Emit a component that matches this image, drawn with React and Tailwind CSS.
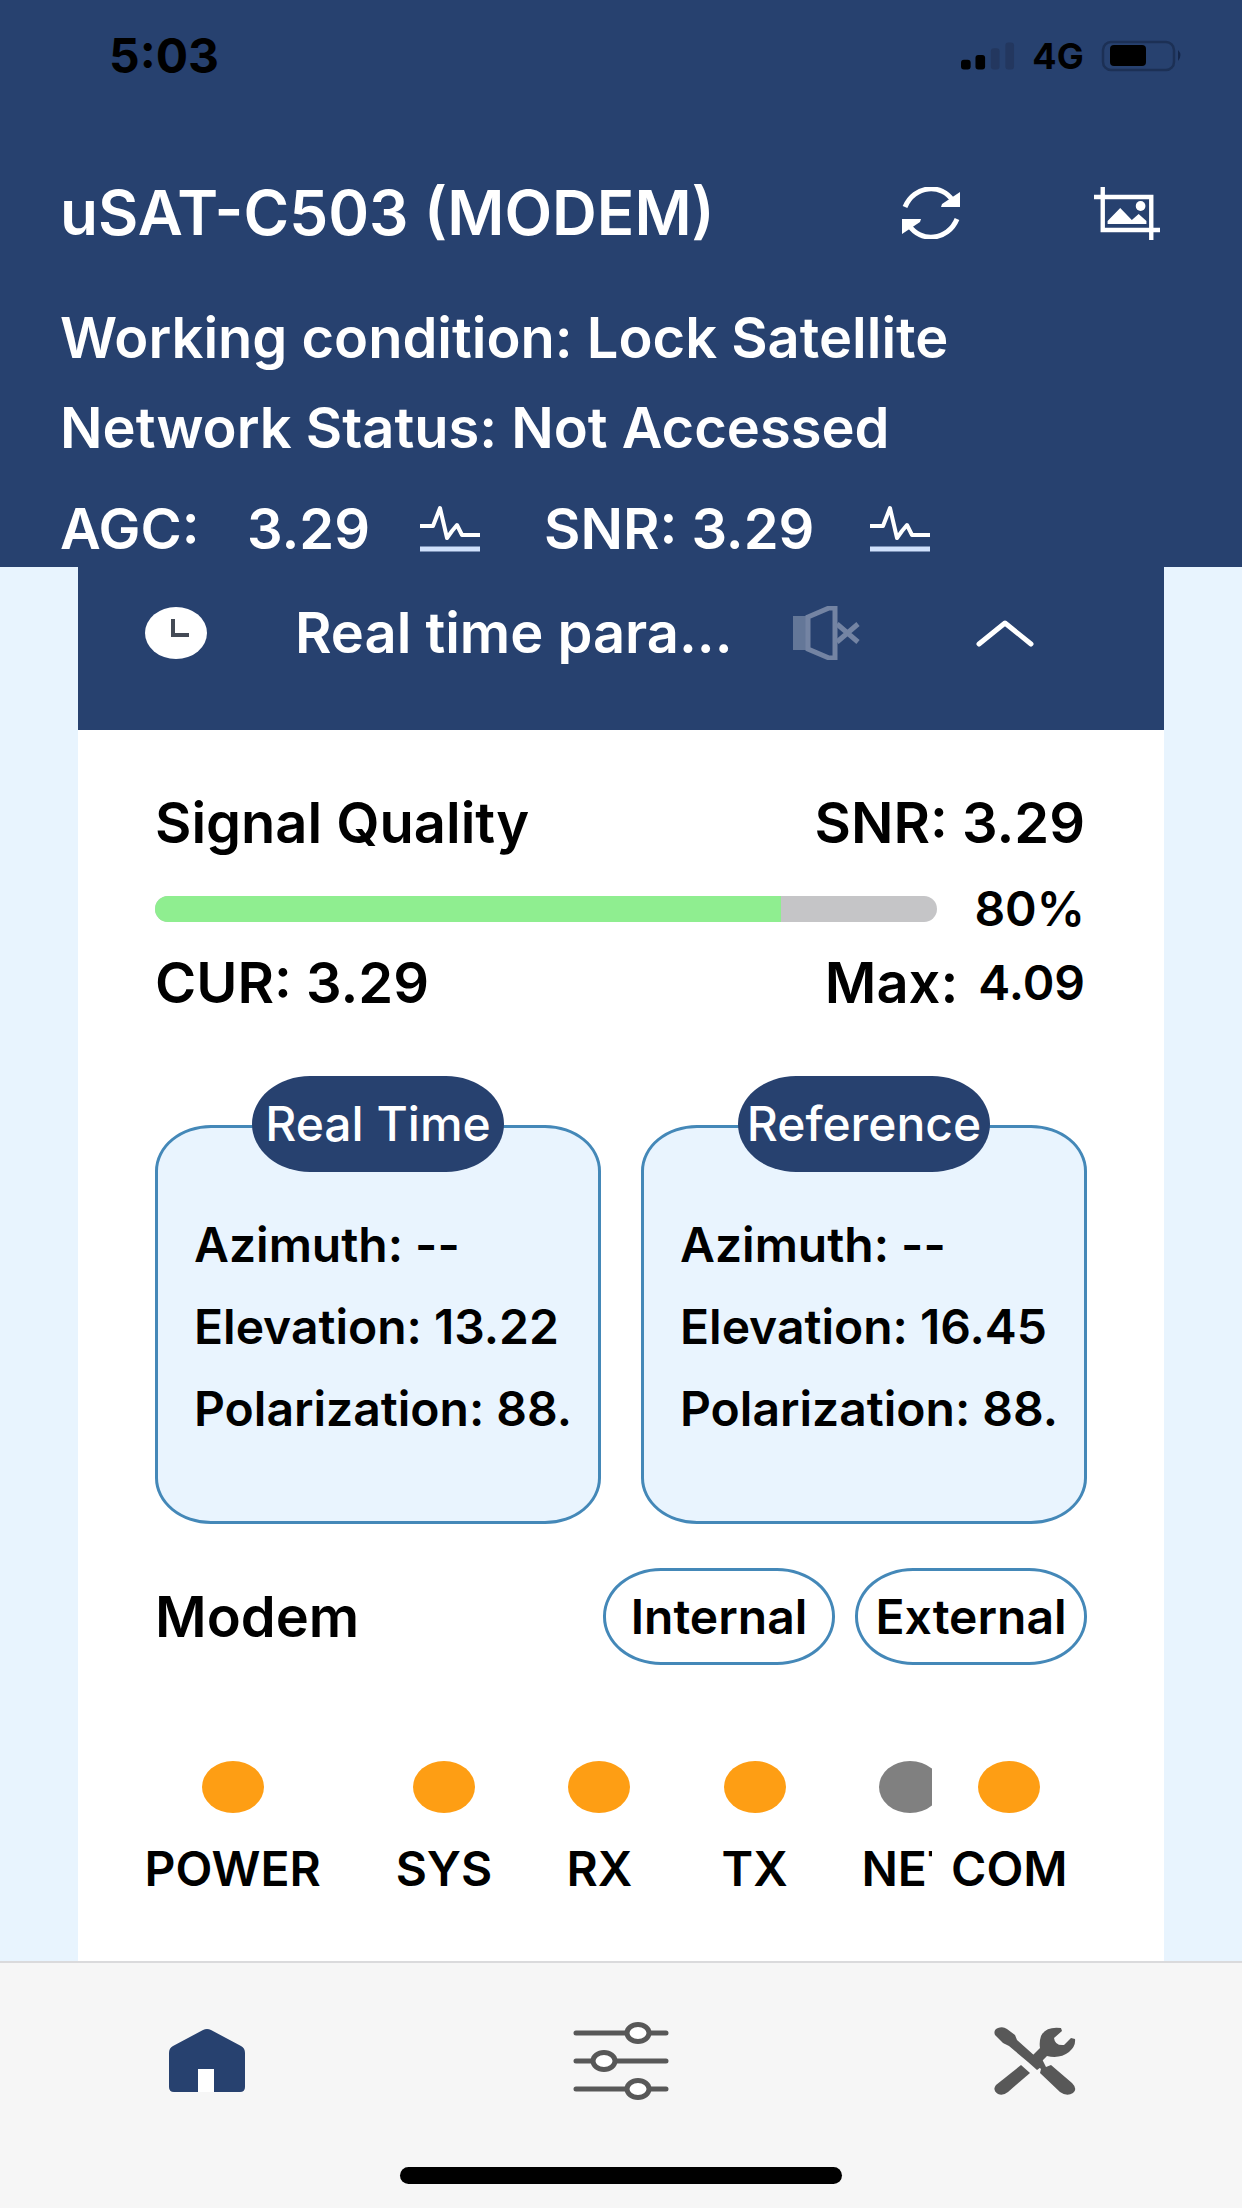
import React, { useState } from 'react';

const angles = [
  { title: 'Real Time', azimuth: '--', elevation: '13.22', polarization: '88.' },
  { title: 'Reference', azimuth: '--', elevation: '16.45', polarization: '88.' },
];

const PulseIcon = () => (
  <svg className="w-[60px] h-[48px]" viewBox="0 0 60 48" preserveAspectRatio="none" fill="none" stroke="currentColor" aria-hidden="true">
    <path strokeWidth="4" strokeLinejoin="round" d="M0 21h13l7-18 7 30 5-7 5-6 5 10h18" />
    <path strokeWidth="5" stroke="#cfe0fb" d="M0 44h60" />
  </svg>
);

const StatusBar = () => (
  <div className="h-[112px] pl-[109px] pr-[59px] flex items-center justify-between text-black">
    <span className="text-[48px] leading-[60px] font-bold">5:03</span>
    <div className="flex items-center">
      <svg className="w-[54px] h-[30px]" viewBox="0 0 56 30" aria-hidden="true">
        <rect x="0" y="19" width="10" height="10" rx="3" />
        <rect x="15" y="14" width="10" height="15" rx="3" />
        <rect x="31" y="7" width="9" height="22" rx="3" fill="#23375f" />
        <rect x="46" y="1" width="9" height="28" rx="3" fill="#23375f" />
      </svg>
      <span className="w-[86px] text-center text-[36px] leading-[60px] font-bold">4G</span>
      <svg className="w-[82px] h-[32px]" viewBox="0 0 82 32" aria-hidden="true">
        <rect x="2" y="2" width="71" height="28" rx="8" fill="none" stroke="#1c3055" strokeWidth="2.5" />
        <rect x="9" y="5" width="36" height="21" rx="4" />
        <path d="M77 10q5 5 0 11z" fill="#14264a" />
      </svg>
    </div>
  </div>
);

const Header = () => (
  <header className="bg-[#27416f] text-white">
    <StatusBar />
    <div className="pl-[60px] pr-[82px]">
      <div className="mt-[60px] h-[82px] flex items-center">
        <h1 className="flex-1 text-[62px] leading-[80px] font-semibold whitespace-nowrap">uSAT-C503 (MODEM)</h1>
        <button type="button" aria-label="Refresh" className="mr-[132px]">
          <svg className="w-[62px] h-[52px]" viewBox="0 0 62 52" preserveAspectRatio="none" aria-hidden="true">
            <path fill="none" stroke="currentColor" strokeWidth="5" d="M5 20C14-2 42-4 53 14M57 32C48 54 20 56 9 38" />
            <path fill="currentColor" d="M60 5v15H41l1-3zM2 47V32h19l-1 3z" />
          </svg>
        </button>
        <button type="button" aria-label="Screenshot">
          <svg className="w-[66px] h-[54px]" viewBox="0 0 68 54" preserveAspectRatio="none" fill="none" stroke="currentColor" aria-hidden="true">
            <path strokeWidth="4.5" d="M0 11h59v43M9 1v43h59" />
            <circle cx="48" cy="20" r="5" fill="currentColor" stroke="none" />
            <path fill="currentColor" stroke="none" d="M14 38v-3l13-13 12 12 7-6 8 7v3z" />
          </svg>
        </button>
      </div>
      <p className="mt-[39px] text-[56px] leading-[90px] font-semibold">Working condition: Lock Satellite</p>
      <p className="text-[56px] leading-[90px] font-semibold">Network Status: Not Accessed</p>
      <div className="mt-[18px] h-[76px] flex items-center text-[56px] leading-[60px] font-semibold whitespace-nowrap">
        <span className="w-[187px]">AGC:</span>
        <span className="w-[173px]">3.29</span>
        <button type="button" aria-label="AGC chart" className="mr-[64px]"><PulseIcon /></button>
        <span className="w-[326px]">SNR: 3.29</span>
        <button type="button" aria-label="SNR chart"><PulseIcon /></button>
      </div>
    </div>
  </header>
);

const AngleCard = ({ item }) => (
  <section className="relative flex-1 min-w-0 border-[3px] border-[#4488b8] rounded-[56px/46px] bg-[#e9f4fe] pt-[76px] pb-[71px] pl-[36px]">
    <h3 className="absolute left-1/2 top-[-52px] -translate-x-1/2 w-[252px] h-[96px] rounded-[58px/48px] bg-[#27416f] flex items-center justify-center text-white text-[48px] font-medium whitespace-nowrap">
      {item.title}
    </h3>
    <div className="text-[48px] leading-[82px] font-semibold whitespace-nowrap">
      <p>Azimuth: {item.azimuth}</p>
      <p>Elevation: {item.elevation}</p>
      <p>Polarization: {item.polarization}</p>
    </div>
  </section>
);

const Led = ({ label, on = true, className }) => (
  <div className={`shrink-0 flex flex-col items-center ${className}`}>
    <span className={`w-[62px] h-[52px] rounded-[50%] ${on ? 'bg-[#fe9e14]' : 'bg-[#808080]'}`} />
    <span className="mt-[26px] text-[48px] leading-[60px] font-semibold">{label}</span>
  </div>
);

const TabBar = ({ tab, setTab }) => {
  const color = (name) => (tab === name ? 'text-[#27416f]' : 'text-[#585858]');

  return (
    <footer className="bg-[#f6f6f6] border-t-2 border-[#dadadc] pb-[24px]">
      <nav className="h-[196px] grid grid-cols-3">
        <button type="button" aria-label="Home" onClick={() => setTab('home')} className={`flex items-center justify-center ${color('home')}`}>
          <svg className="w-[76px] h-[64px]" viewBox="0 0 76 64" preserveAspectRatio="none" aria-hidden="true">
            <path fill="currentColor" d="M34 1q4-2 8 0l30 16q4 2 4 7v34q0 5-5 5H45V40H29v23H5q-5 0-5-5V24q0-5 4-7z" />
            <path fill="#fff" d="M29 40h16v23H29z" />
          </svg>
        </button>
        <button type="button" aria-label="Settings" onClick={() => setTab('settings')} className={`flex items-center justify-center ${color('settings')}`}>
          <svg className="w-[96px] h-[78px]" viewBox="0 0 96 78" preserveAspectRatio="none" stroke="currentColor" aria-hidden="true">
            <path strokeWidth="5" strokeLinecap="round" d="M3 11h90M3 39h90M3 67h90" />
            <g fill="#fff" strokeWidth="5">
              <ellipse cx="65" cy="11" rx="11" ry="8.5" />
              <ellipse cx="31" cy="39" rx="11" ry="8.5" />
              <ellipse cx="65" cy="67" rx="11" ry="8.5" />
            </g>
          </svg>
        </button>
        <button type="button" aria-label="Tools" onClick={() => setTab('tools')} className={`flex items-center justify-center ${color('tools')}`}>
          <svg className="w-[82px] h-[68px]" viewBox="0 0 82 68" preserveAspectRatio="none" fill="currentColor" aria-hidden="true">
            <path d="M1 8Q-1 3 4 1q5-2 9 1l8 6 2 5 19 17 8 8-7 5-9-8L15 19 9 16z" />
            <path d="M27 38l9 8-22 19q-5 4-10 2-6-4-2-9z" />
            <path d="M57 38l21 18q6 6 1 10-6 4-13-1L46 46l1-4-6-6 7-4 4 8z" />
            <path d="M67 1Q52-1 47 9q-2 6-1 12l-8 8 8 7 7-7q13 3 22-4 7-6 6-13l-4-1-7 7q-9 1-10-7l8-7z" />
          </svg>
        </button>
      </nav>
      <div className="mx-auto mt-[8px] w-[442px] h-[17px] rounded-full bg-black" />
    </footer>
  );
};

const App = () => {
  const [tab, setTab] = useState('home');
  const [isOpen, setIsOpen] = useState(true);
  const quality = 80;

  return (
    <div className="min-h-screen flex flex-col bg-[#e8f4fe] text-black font-['Inter',sans-serif]">
      <Header />
      <main className="flex-1 mx-[78px] bg-white">
        <div className="bg-[#27416f] text-white pb-[31px]">
          <div className="h-[132px] pl-[67px] pr-[130px] flex items-center">
            <svg className="w-[62px] h-[52px]" viewBox="0 0 62 52" aria-hidden="true">
              <ellipse cx="31" cy="26" rx="31" ry="26" fill="#fff" />
              <path d="M28 12v16h16" fill="none" stroke="#444a55" strokeWidth="4" />
            </svg>
            <h2 className="flex-1 ml-[88px] text-[56px] leading-[60px] font-semibold whitespace-nowrap">Real time para...</h2>
            <button type="button" aria-label="Mute" className="mr-[116px] text-[#7484a3]">
              <svg className="w-[68px] h-[54px]" viewBox="0 0 68 54" preserveAspectRatio="none" fill="none" stroke="currentColor" aria-hidden="true">
                <path fill="currentColor" stroke="none" d="M1 10h17v34H1z" opacity="0.8" />
                <path strokeWidth="5" d="M16 11l21-9h6v50h-6l-21-9z" />
                <path strokeWidth="5" d="M45 18l21 18M66 18L45 36" />
              </svg>
            </button>
            <button type="button" aria-label="Toggle panel" aria-expanded={isOpen} onClick={() => setIsOpen(!isOpen)}>
              <svg className="w-[58px] h-[28px]" viewBox="0 0 58 28" preserveAspectRatio="none" fill="none" stroke="currentColor" aria-hidden="true">
                <path strokeWidth="5" strokeLinecap="round" strokeLinejoin="round" d="M3 25L29 4l26 21" />
              </svg>
            </button>
          </div>
        </div>

        {isOpen && (
          <div className="px-[77px] pb-[62px]">
            <div className="mt-[63px] pr-[2px] flex justify-between text-[56px] leading-[60px] font-semibold">
              <h3>Signal Quality</h3>
              <span>SNR: 3.29</span>
            </div>
            <div className="mt-[28px] h-[56px] pr-[2px] flex items-center justify-between">
              <div className="flex-1 mr-[30px] h-[26px] rounded-full bg-[#c5c5c7] overflow-hidden">
                <div className="h-full bg-[#8fee90]" style={{ width: `${quality}%` }} />
              </div>
              <span className="w-[118px] text-right text-[48px] leading-[56px] font-semibold">{quality}%</span>
            </div>
            <div className="mt-[16px] pr-[2px] flex items-center justify-between text-[56px] leading-[60px] font-semibold">
              <span>CUR: 3.29</span>
              <span className="flex items-center gap-[20px]">
                Max:
                <span className="text-[48px]">4.09</span>
              </span>
            </div>

            <div className="mt-[112px] flex gap-[40px]">
              {angles.map((item) => (
                <AngleCard key={item.title} item={item} />
              ))}
            </div>

            <div className="mt-[44px] flex items-center">
              <h3 className="flex-1 text-[56px] leading-[60px] font-semibold">Modem</h3>
              <div className="flex gap-[20px] text-[48px] font-semibold">
                <button type="button" className="w-[232px] h-[97px] border-[3px] border-[#4488b8] rounded-[58px/48px]">Internal</button>
                <button type="button" className="w-[232px] h-[97px] border-[3px] border-[#4488b8] rounded-[58px/48px]">External</button>
              </div>
            </div>

            <div className="mt-[96px] flex">
              <Led label="POWER" className="w-1/6" />
              <div className="flex-1 min-w-0 flex overflow-hidden">
                <Led label="SYS" className="w-1/4 ml-[56px]" />
                <Led label="RX" className="w-1/4" />
                <Led label="TX" className="w-1/4" />
                <Led label="NET" on={false} className="w-1/4" />
              </div>
              <Led label="COM" className="w-1/6" />
            </div>
          </div>
        )}
      </main>
      <TabBar tab={tab} setTab={setTab} />
    </div>
  );
};

export default App;
